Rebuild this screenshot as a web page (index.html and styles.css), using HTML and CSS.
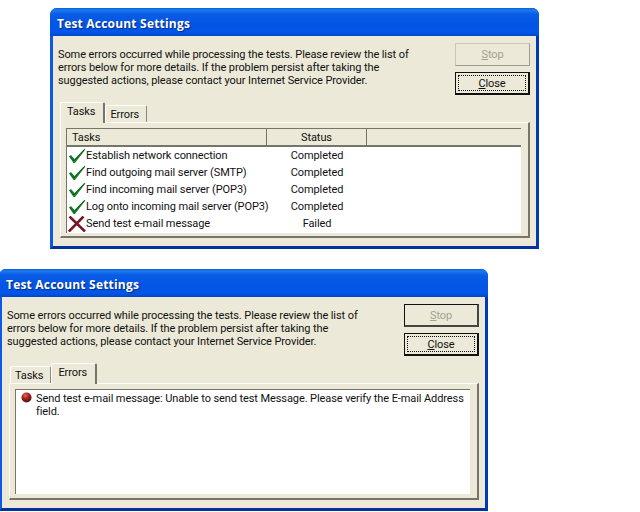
FILE: index.html
```html
<!DOCTYPE html>
<html lang="en">
<head>
<meta charset="utf-8">
<title>Test Account Settings</title>
<link rel="stylesheet" href="styles.css">
</head>
<body>
<svg class="defs" width="0" height="0" aria-hidden="true">
  <symbol id="check" viewBox="0 0 18 16"><path d="M1 8.5 L3 7 L6.5 11 L16.5 .8 L17.4 1.6 L7 15 L5.5 15 Z" fill="#1f7f33"/><path d="M2 8.5 L6 13 L16 2" fill="none" stroke="#0f5f22" stroke-width="1"/></symbol>
  <symbol id="cross" viewBox="0 0 18 16"><path d="M1.5 .5 L17 15.5 M15.5 .5 L.8 15.5" fill="none" stroke="#761526" stroke-width="2.6"/></symbol>
</svg>

<section class="window window-tasks">
  <header class="titlebar">Test Account Settings</header>
  <div class="content">
    <div class="top">
      <p class="message">Some errors occurred while processing the tests. Please review the list of<br>errors below for more details. If the problem persist after taking the<br>suggested actions, please contact your Internet Service Provider.</p>
      <div class="buttons">
        <button class="btn btn-disabled"><span class="btn-label"><u>S</u>top</span></button>
        <button class="btn btn-default"><span class="btn-label"><u>C</u>lose</span></button>
      </div>
    </div>
    <div class="tabs">
      <span class="tab tab-active">Tasks</span>
      <span class="tab">Errors</span>
    </div>
    <div class="panel">
      <div class="list">
        <div class="list-head">
          <span class="head-cell head-tasks">Tasks</span>
          <span class="head-cell head-status">Status</span>
          <span class="head-cell"></span>
        </div>
        <div class="row"><svg class="row-icon"><use href="#check"/></svg><span class="row-name">Establish network connection</span><span class="row-status">Completed</span></div>
        <div class="row"><svg class="row-icon"><use href="#check"/></svg><span class="row-name">Find outgoing mail server (SMTP)</span><span class="row-status">Completed</span></div>
        <div class="row"><svg class="row-icon"><use href="#check"/></svg><span class="row-name">Find incoming mail server (POP3)</span><span class="row-status">Completed</span></div>
        <div class="row"><svg class="row-icon"><use href="#check"/></svg><span class="row-name">Log onto incoming mail server (POP3)</span><span class="row-status">Completed</span></div>
        <div class="row"><svg class="row-icon"><use href="#cross"/></svg><span class="row-name">Send test e-mail message</span><span class="row-status">Failed</span></div>
      </div>
    </div>
  </div>
</section>

<section class="window window-errors">
  <header class="titlebar">Test Account Settings</header>
  <div class="content">
    <div class="top">
      <p class="message">Some errors occurred while processing the tests. Please review the list of<br>errors below for more details. If the problem persist after taking the<br>suggested actions, please contact your Internet Service Provider.</p>
      <div class="buttons">
        <button class="btn btn-stop-dark"><span class="btn-label"><u>S</u>top</span></button>
        <button class="btn btn-default"><span class="btn-label"><u>C</u>lose</span></button>
      </div>
    </div>
    <div class="tabs">
      <span class="tab">Tasks</span>
      <span class="tab tab-active">Errors</span>
    </div>
    <div class="panel panel-errors">
      <div class="error-box">
        <svg class="ball" viewBox="0 0 12 12"><defs><radialGradient id="ballfill" cx=".4" cy=".3" r=".75"><stop offset="0" stop-color="#e8675a"/><stop offset=".45" stop-color="#a3201c"/><stop offset="1" stop-color="#4f0d0d"/></radialGradient></defs><circle cx="6" cy="6" r="5.5" fill="url(#ballfill)"/></svg>
        <p class="error-text">Send test e-mail message: Unable to send test Message. Please verify the E-mail Address field.</p>
      </div>
    </div>
  </div>
</section>
</body>
</html>
```
FILE: styles.css
```css
html, body { margin: 0; padding: 0; }
body {
  position: relative;
  width: 640px;
  height: 512px;
  overflow: hidden;
  background: #fff;
  font-family: Roboto, "Liberation Sans", sans-serif;
  font-size: 11px;
  line-height: 13px;
  letter-spacing: -.09px;
  color: #111;
}
.defs { position: absolute; }

.window {
  position: absolute;
  box-sizing: border-box;
  display: flex;
  flex-direction: column;
  background: #0855dd;
  border-radius: 7px 7px 0 0;
  border-left: 3px solid #0a5ae6;
  border-right: 3px solid #0238b8;
  border-bottom: 3px solid #02309f;
}
.window-tasks { left: 50px; top: 8px; width: 489px; height: 241px; }
.window-errors { left: -1px; top: 269px; width: 489px; height: 242px; }

.titlebar {
  box-sizing: border-box;
  height: 28px;
  margin: 0 -3px;
  padding: 8px 0 0 7px;
  border-radius: 7px 7px 0 0;
  background: linear-gradient(#0a5fd8 0, #1c7bf0 2px, #0a5ce6 6px, #0355e4 16px, #0256e8 24px, #0347c8 28px);
  color: #fff;
  font-family: "Open Sans", "Noto Sans", sans-serif;
  font-weight: 700;
  font-size: 12px;
  line-height: 16px;
  letter-spacing: .2px;
  text-shadow: 1px 1px 1px #0a2a80;
}
.content {
  flex: 1;
  background: #ece9d8;
  padding: 0 6px 0 5px;
}

.top { display: flex; justify-content: space-between; }
.message { margin: 12px 0 0; }
.buttons { display: flex; flex-direction: column; gap: 6px; padding-top: 7px; }

.btn {
  box-sizing: border-box;
  width: 75px;
  height: 23px;
  padding: 2px;
  background: #ece9d8;
  font: inherit;
  letter-spacing: inherit;
  color: inherit;
}
.btn-label {
  display: block;
  height: 100%;
  line-height: 17px;
  text-align: center;
}
.btn-disabled {
  border: 1px solid #c9c7ba;
  border-right-color: #9d9b8e;
  border-bottom-color: #9d9b8e;
  color: #a3a192;
}
.btn-stop-dark {
  border: 1px solid #111;
  border-right-width: 2px;
  border-bottom-width: 2px;
  border-right-color: #444;
  border-bottom-color: #444;
  color: #a3a192;
}
.btn-default {
  border: 1px solid #111;
  border-right-width: 2px;
  border-bottom-width: 2px;
}
.btn-default .btn-label { box-sizing: border-box; border: 1px dotted #111; line-height: 15px; }

.tabs {
  display: flex;
  align-items: flex-end;
  height: 20px;
  margin: 7px 0 0 2px;
  position: relative;
  z-index: 1;
}
.window-errors .tabs { margin-left: 3px; }
.tab {
  box-sizing: border-box;
  height: 17px;
  padding: 2px 7px 0 4px;
  border: 1px solid #fff;
  border-right-color: #8a8878;
  border-bottom: 0;
  border-radius: 2px 2px 0 0;
  background: #ece9d8;
}
.tab-active {
  height: 21px;
  margin-bottom: -1px;
  padding: 2px 8px 0 6px;
  border-right: 2px solid #77756a;
}
.panel {
  box-sizing: border-box;
  height: 116px;
  margin-left: 2px;
  padding: 5px 7px 0 5px;
  border: 1px solid #fff;
  border-right: 2px solid #77756a;
  border-bottom: 2px solid #77756a;
}
.list {
  height: 104px;
  background: #fff;
  border-left: 1px solid #77756a;
  border-top: 1px solid #77756a;
}
.list-head {
  display: grid;
  grid-template-columns: 200px 100px 1fr;
  height: 16px;
  background: #ece9d8;
  border-bottom: 2px solid #77756a;
}
.head-cell {
  line-height: 18px;
  border-right: 1px solid #77756a;
}
.head-cell:last-child { border-right: 0; }
.head-tasks { padding-left: 5px; }
.head-status { text-align: center; }
.row {
  display: grid;
  grid-template-columns: 19px 181px 100px;
  align-items: center;
  height: 17px;
}
.row-icon { width: 18px; height: 16px; margin-left: 1px; }
.row-name { white-space: nowrap; }
.row-status { text-align: center; }

.panel-errors { height: 117px; }
.error-box {
  display: flex;
  gap: 4px;
  height: 105px;
  box-sizing: border-box;
  padding: 2px 0 0 5px;
  background: #fff;
  border-left: 1px solid #77756a;
  border-top: 1px solid #77756a;
}
.ball { flex: none; width: 11px; height: 11px; }
.error-text { margin: 0; }
```
